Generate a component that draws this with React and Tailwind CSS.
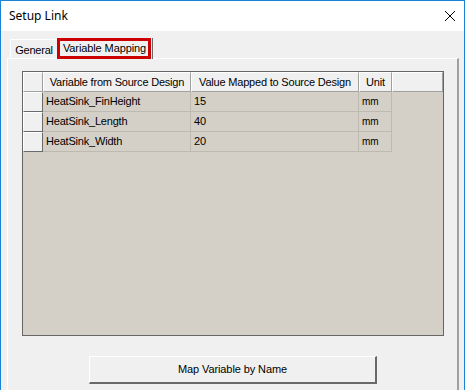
import React from "react";

const font = { fontFamily: '"Liberation Sans", Arial, sans-serif' };

function HeaderCell({ w, children, center = true }) {
  return (
    <div
      className={`h-[20px] shrink-0 bg-[#f0f0f0] border-t border-l border-white border-r border-b border-r-[#a0a0a0] border-b-[#a0a0a0] flex items-center ${center ? "justify-center" : ""} text-[11px] tracking-[-0.2px] text-black`}
      style={{ width: w }}
    >
      {children}
    </div>
  );
}

function RowHead() {
  return (
    <div className="w-[20px] h-[20px] shrink-0 bg-[#f0f0f0] border-t border-l border-white border-r border-b border-r-[#696969] border-b-[#696969]" />
  );
}

function Cell({ w, children, small }) {
  return (
    <div
      className={`h-[20px] shrink-0 border-r border-b border-[#bdbab2] flex items-center pl-[3px] ${small ? "text-[10px]" : "text-[11px] tracking-[-0.2px]"} text-black`}
      style={{ width: w }}
    >
      {children}
    </div>
  );
}

const rows = [
  ["HeatSink_FinHeight", "15", "mm"],
  ["HeatSink_Length", "40", "mm"],
  ["HeatSink_Width", "20", "mm"],
];

export default function App() {
  return (
    <div
      className="w-[465px] h-[390px] overflow-hidden bg-[#f0f0f0] border-t border-l border-r border-[#1883d7] flex flex-col"
      style={font}
    >
      <div className="h-[30px] shrink-0 bg-white flex items-center justify-between pl-[8px] pr-[8px]">
        <span
          className="text-[12px] text-black"
          style={{ fontFamily: '"Noto Sans", "Open Sans", sans-serif' }}
        >
          Setup Link
        </span>
        <svg width="12" height="12" viewBox="0 0 12 12" className="mr-[0px]">
          <path d="M1 1 L11 11 M11 1 L1 11" stroke="#000" strokeWidth="1" />
        </svg>
      </div>
      <div className="flex-1 flex flex-col pl-[6px] pr-[5px]">
        <div className="h-[27px] shrink-0 flex items-end pl-[3px]">
          <div className="h-[19px] w-[48px] border-t border-l border-white border-r border-r-[#a0a0a0] flex items-center justify-center text-[11px] tracking-[-0.2px] text-black pt-[2px]">
            General
          </div>
          <div className="h-[21px] w-[96px] -ml-px relative bg-[#f0f0f0] border-r border-r-[#696969] flex items-center justify-center text-[11px] tracking-[-0.1px] text-black mb-[-1px] z-10">
            <div className="absolute left-0 top-0 w-[94px] h-[21px] border-[3px] border-[#cc0000]" />
            <span className="relative">Variable Mapping</span>
          </div>
        </div>
        <div className="flex-1 border-t border-l border-white border-r-2 border-r-[#a0a0a0] pt-[12px] pl-[14px]">
          <div className="w-[422px] h-[265px] border border-[#666666] bg-[#d4d0c8] flex flex-col">
            <div className="flex">
              <HeaderCell w={20} />
              <HeaderCell w={148}>Variable from Source Design</HeaderCell>
              <HeaderCell w={168}>Value Mapped to Source Design</HeaderCell>
              <HeaderCell w={33}>Unit</HeaderCell>
              <HeaderCell w={51} />
            </div>
            {rows.map((r) => (
              <div key={r[0]} className="flex">
                <RowHead />
                <Cell w={148}>{r[0]}</Cell>
                <Cell w={168}>{r[1]}</Cell>
                <Cell w={33} small>
                  {r[2]}
                </Cell>
              </div>
            ))}
          </div>
          <div className="w-[422px] flex justify-center mt-[20px]">
            <button className="w-[288px] h-[28px] bg-[#f0f0f0] border-t border-l border-white border-r-2 border-b-2 border-r-[#696969] border-b-[#696969] text-[11px] tracking-[-0.1px] text-black flex items-center justify-center">
              Map Variable by Name
            </button>
          </div>
        </div>
      </div>
    </div>
  );
}
